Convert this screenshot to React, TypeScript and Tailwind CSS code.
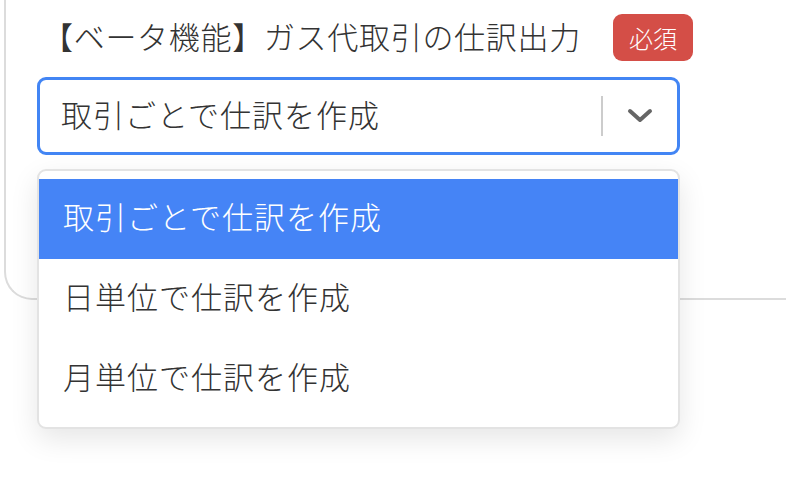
import React from 'react';

const options = ['取引ごとで仕訳を作成', '日単位で仕訳を作成', '月単位で仕訳を作成'];

const font = { fontFamily: '"Noto Sans CJK JP", "Noto Sans", sans-serif' };

const Chevron: React.FC = () => (
  <svg width="26" height="16" viewBox="0 0 26 16" fill="none">
    <polyline points="3,3 13,12 23,3" stroke="#666666" strokeWidth="4" strokeLinecap="round" strokeLinejoin="round" />
  </svg>
);

export default function App() {
  const selected = 0;

  return (
    <div className="relative w-[786px] h-[480px] overflow-hidden bg-white text-[#333333] font-light" style={font}>
      {/* card (top and right run off the page) */}
      <div className="ml-[4px] w-[820px] h-[300px] border-l-2 border-b-2 border-[#dcdcdc] rounded-bl-[28px] pl-[31px] pt-[14px]">
        <div className="flex items-center h-[47px]">
          <span className="ml-[5px] pb-[4px] text-[31px] leading-none tracking-[0.7px]">【ベータ機能】ガス代取引の仕訳出力</span>
          <span className="ml-[32px] flex items-center justify-center w-[80px] h-[47px] rounded-[9px] bg-[#d44e47] text-white text-[24px] leading-none">
            必須
          </span>
        </div>

        <div className="mt-[16px] w-[643px] h-[78px] border-[3px] border-[#4285f4] rounded-[9px] flex items-center">
          <span className="flex-1 pl-[21px] pb-[6px] text-[31px] leading-none tracking-[1px]">{options[selected]}</span>
          <span className="w-[2px] h-[40px] bg-[#cccccc]" />
          <span className="w-[74px] flex items-center justify-center">
            <Chevron />
          </span>
        </div>
      </div>

      {/* open menu */}
      <div className="absolute left-[37px] top-[169px] w-[643px] py-[8px] bg-white border-2 border-[#e3e3e3] rounded-[9px] shadow-[0_10px_28px_rgba(0,0,0,0.10)]">
        {options.map((o, i) => (
          <div
            key={o}
            className={
              i === selected
                ? 'h-[80px] flex items-center pl-[24px] pb-[7px] bg-[#4584f6] text-white text-[31px] leading-none tracking-[1px]'
                : 'h-[80px] flex items-center pl-[24px] pb-[7px] text-[#333333] text-[31px] leading-none tracking-[1px]'
            }
          >
            {o}
          </div>
        ))}
      </div>
    </div>
  );
}
